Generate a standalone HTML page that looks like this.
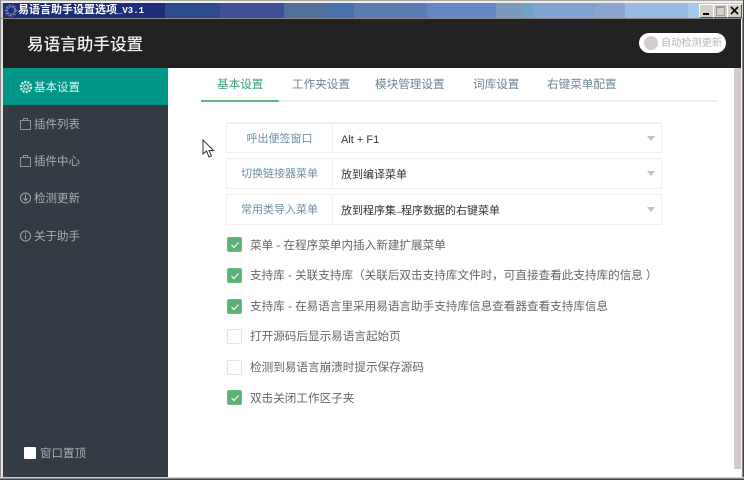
<!DOCTYPE html>
<html><head><meta charset="utf-8">
<style>
html,body{margin:0;padding:0}
body{width:744px;height:480px;position:relative;overflow:hidden;background:#fff;font-family:"Liberation Sans","Noto Sans CJK SC",sans-serif;font-size:12px}
.a{position:absolute}
.t{position:absolute;white-space:nowrap;line-height:16px;height:16px}
.band{position:absolute;top:3px;height:15px}
.sb{color:#a9adb0;font-size:11.5px;left:34px}
.ic{position:absolute;left:19px}
.tab{color:#6f8593;top:77px;font-size:11.6px}
.row{position:absolute;left:226px;width:434px;height:29px;border:1px solid #efefef}
.row i{position:absolute;left:105px;top:0;bottom:0;width:1px;background:#efefef}
.lb{position:absolute;left:0;width:105px;text-align:center;top:7px;color:#6f8fa3;line-height:16px;font-style:normal;font-size:11px}
.val{position:absolute;left:114px;top:8px;color:#333;line-height:16px;font-size:11px;white-space:nowrap}
.arr{position:absolute;right:6px;top:12px;width:0;height:0;border:4.5px solid transparent;border-top:5px solid #c2c2c2;border-bottom:0}
.ck{position:absolute;left:227px;width:15px;height:15px;box-sizing:border-box;border-radius:2px}
.on{background:#5bb075;border:1px solid #6cbc84}
.off{background:#fff;border:1px solid #e2e2e2}
.lab{left:250px;color:#666;font-size:11.6px}
</style></head><body>
<div class="a" style="left:0;top:0;width:744px;height:480px;background:#d4d0c8"></div>
<div class="a" style="left:0;top:0;width:744px;height:1px;background:#a8a8a8"></div>
<div class="a" style="left:1px;top:1px;width:742px;height:2px;background:#f0eeea"></div>
<div class="a" style="left:0;top:0;width:1px;height:480px;background:#8a8a8a"></div>
<div class="band" style="left:3px;width:162px;background:#1e2d78"></div>
<div class="band" style="left:165px;width:55px;background:#2c4b8d"></div>
<div class="band" style="left:220px;width:64px;background:#414f96"></div>
<div class="band" style="left:284px;width:43px;background:#4f709a"></div>
<div class="band" style="left:327px;width:27px;background:#4a70ab"></div>
<div class="band" style="left:354px;width:73px;background:#5a7cb2"></div>
<div class="band" style="left:427px;width:69px;background:#6488c3"></div>
<div class="band" style="left:496px;width:28px;background:#7b9bbc"></div>
<div class="band" style="left:524px;width:9px;background:#6ea3c8"></div>
<div class="band" style="left:533px;width:62px;background:#7fa2d3"></div>
<div class="band" style="left:595px;width:30px;background:#8aa6d0"></div>
<div class="band" style="left:625px;width:63px;background:#97bbe5"></div>
<div class="band" style="left:688px;width:53px;background:#a3c9ef"></div>
<svg class="a" style="left:4px;top:3px" width="14" height="15" viewBox="0 0 14 15"><circle cx="7" cy="7.5" r="4.2" fill="none" stroke="#6f80b0" stroke-width="2.4" stroke-dasharray="2 1"/><circle cx="7" cy="7.5" r="6" fill="none" stroke="#4d5f98" stroke-width="1.2" stroke-dasharray="2 1.6"/></svg>
<div class="t" style="left:18px;top:2px;color:#fff;font-weight:700;font-size:11px;font-family:'Liberation Sans','Noto Sans CJK SC',sans-serif">易语言助手设置选项<span style="font-family:'Liberation Mono',monospace;font-size:9px;letter-spacing:0">_V3.1</span></div>
<!-- window buttons -->
<div class="a" style="left:699px;top:4px;width:13px;height:12px;background:#d4d0c8;border:1px solid;border-color:#fff #555 #555 #fff"><div class="a" style="left:3px;top:8px;width:6px;height:2px;background:#000"></div></div>
<div class="a" style="left:713px;top:4px;width:13px;height:12px;background:#d4d0c8;border:1px solid;border-color:#fff #555 #555 #fff"><div class="a" style="left:2px;top:1px;width:7px;height:7px;border:1px solid #9a9a9a;border-top-width:2px"></div></div>
<div class="a" style="left:727px;top:4px;width:13px;height:12px;background:#d4d0c8;border:1px solid;border-color:#fff #555 #555 #fff"><svg class="a" style="left:2px;top:1px" width="9" height="9" viewBox="0 0 9 9"><path d="M1 1L8 8M8 1L1 8" stroke="#000" stroke-width="1.6"/></svg></div>
<div class="a" style="left:0;top:18px;width:744px;height:1px;background:#8a8a8a"></div>
<!-- header -->
<div class="a" style="left:3px;top:19px;width:738px;height:49px;background:#222"></div>
<div class="t" style="left:27px;top:34px;color:#f2f2f2;font-size:16.6px;font-weight:500;line-height:22px;height:22px">易语言助手设置</div>
<div class="a" style="left:639px;top:33px;width:87px;height:20px;background:#fff;border-radius:10px"></div>
<div class="a" style="left:644px;top:36px;width:14px;height:14px;background:#d3cbcd;border-radius:50%"></div>
<div class="t" style="left:661px;top:36px;color:#b5b5b5;font-size:10.2px">自动检测更新</div>
<!-- main -->
<div class="a" style="left:3px;top:68px;width:738px;height:409px;background:#fff"></div>
<div class="a" style="left:3px;top:68px;width:165px;height:409px;background:#333c45"></div>
<div class="a" style="left:3px;top:68px;width:165px;height:37px;background:#009688"></div>
<svg class="ic" style="top:80px" width="14" height="14" viewBox="0 0 14 14"><circle cx="7" cy="7" r="2.2" fill="none" stroke="#d8efec" stroke-width="1.2"/><circle cx="7" cy="7" r="5" fill="none" stroke="#d8efec" stroke-width="2.4" stroke-dasharray="2 1.1"/></svg>
<div class="t sb" style="top:80px;color:#e4f3f1">基本设置</div>
<svg class="ic" style="top:117px" width="14" height="14" viewBox="0 0 14 14" fill="none" stroke="#8f9497"><path d="M1.500 3.500H11.500V12.500H1.500ZM4.500 3.500V1.500H8.500V3.500"/></svg>
<div class="t sb" style="top:117px">插件列表</div>
<svg class="ic" style="top:154px" width="14" height="14" viewBox="0 0 14 14" fill="none" stroke="#8f9497"><path d="M1.500 3.500H11.500V12.500H1.500ZM4.500 3.500V1.500H8.500V3.500"/></svg>
<div class="t sb" style="top:154px">插件中心</div>
<svg class="ic" style="top:191px" width="14" height="14" viewBox="0 0 14 14" fill="none" stroke="#a0a4a7"><circle cx="6.500" cy="7" r="5"/><path d="M6.500 3.500V9M4.500 7.500L6.500 9.500L8.500 7.500"/></svg>
<div class="t sb" style="top:191px">检测更新</div>
<svg class="ic" style="top:229px" width="14" height="14" viewBox="0 0 14 14" fill="none" stroke="#a0a4a7"><circle cx="6.500" cy="7" r="5"/><path d="M6.500 6V10M6.500 3.500V5"/></svg>
<div class="t sb" style="top:229px">关于助手</div>
<div class="a" style="left:24px;top:447px;width:12px;height:12px;background:#fff;border-radius:1px"></div>
<div class="t sb" style="left:40px;top:446px">窗口置顶</div>
<!-- tabs -->
<div class="a" style="left:201px;top:100px;width:517px;height:2px;background:#f0f0f0"></div>
<div class="a" style="left:201px;top:100px;width:78px;height:2px;background:#5fb878"></div>
<div class="t tab" style="left:217px;color:#3f9f86">基本设置</div>
<div class="t tab" style="left:292px">工作夹设置</div>
<div class="t tab" style="left:375px">模块管理设置</div>
<div class="t tab" style="left:473px">词库设置</div>
<div class="t tab" style="left:547px">右键菜单配置</div>
<!-- cursor -->
<svg class="a" style="left:202px;top:139px" width="14" height="20" viewBox="0 0 14 20"><path d="M1 1V15L4.500 12L7 18L9.500 17L7 11.500H11.500Z" fill="#fff" stroke="#333" stroke-width="1"/></svg>
<!-- rows -->
<div class="row" style="top:122px;border-top-width:2px;height:28px"><i></i><em class="lb">呼出便签窗口</em><span class="val">Alt + F1</span><b class="arr"></b></div>
<div class="row" style="top:158px"><i></i><em class="lb">切换链接器菜单</em><span class="val">放到编译菜单</span><b class="arr"></b></div>
<div class="row" style="top:194px"><i></i><em class="lb">常用类导入菜单</em><span class="val">放到程序集<span style="font-size:8px;margin:0 -1.5px">→</span>程序数据的右键菜单</span><b class="arr"></b></div>
<!-- checks -->
<div class="ck on" style="top:237px"><svg class="a" style="left:1px;top:1px" width="12" height="12" viewBox="0 0 12 12"><path d="M2.500 6L5 8.500L9.500 3.500" fill="none" stroke="#e8f6ec" stroke-width="1.300"/></svg></div>
<div class="t lab" style="top:238px">菜单 - 在程序菜单内插入新建扩展菜单</div>
<div class="ck on" style="top:268px"><svg class="a" style="left:1px;top:1px" width="12" height="12" viewBox="0 0 12 12"><path d="M2.500 6L5 8.500L9.500 3.500" fill="none" stroke="#e8f6ec" stroke-width="1.300"/></svg></div>
<div class="t lab" style="top:268px">支持库 - 关联支持库（关联后双击支持库文件时，可直接查看此支持库的信息<span style="margin-left:3px">）</span></div>
<div class="ck on" style="top:299px"><svg class="a" style="left:1px;top:1px" width="12" height="12" viewBox="0 0 12 12"><path d="M2.500 6L5 8.500L9.500 3.500" fill="none" stroke="#e8f6ec" stroke-width="1.300"/></svg></div>
<div class="t lab" style="top:299px">支持库 - 在易语言里采用易语言助手支持库信息查看器查看支持库信息</div>
<div class="ck off" style="top:329px"></div>
<div class="t lab" style="top:329px">打开源码后显示易语言起始页</div>
<div class="ck off" style="top:360px"></div>
<div class="t lab" style="top:360px">检测到易语言崩溃时提示保存源码</div>
<div class="ck on" style="top:390px"><svg class="a" style="left:1px;top:1px" width="12" height="12" viewBox="0 0 12 12"><path d="M2.500 6L5 8.500L9.500 3.500" fill="none" stroke="#e8f6ec" stroke-width="1.300"/></svg></div>
<div class="t lab" style="top:391px">双击关闭工作区子夹</div>
<!-- scrollbar -->
<div class="a" style="left:734px;top:68px;width:7px;height:401px;background:#d3cbcd"></div>
<!-- borders -->
<div class="a" style="left:741px;top:19px;width:1px;height:459px;background:#f4f2ee"></div>
<div class="a" style="left:742px;top:19px;width:1px;height:459px;background:#8a8a8a"></div>
<div class="a" style="left:743px;top:0;width:1px;height:480px;background:#444"></div>
<div class="a" style="left:1px;top:19px;width:2px;height:458px;background:#e4e2de"></div>
<div class="a" style="left:0;top:477px;width:744px;height:1px;background:#d0cec8"></div>
<div class="a" style="left:0;top:478px;width:744px;height:1px;background:#8a8a8a"></div>
<div class="a" style="left:0;top:479px;width:744px;height:1px;background:#444"></div>
</body></html>
